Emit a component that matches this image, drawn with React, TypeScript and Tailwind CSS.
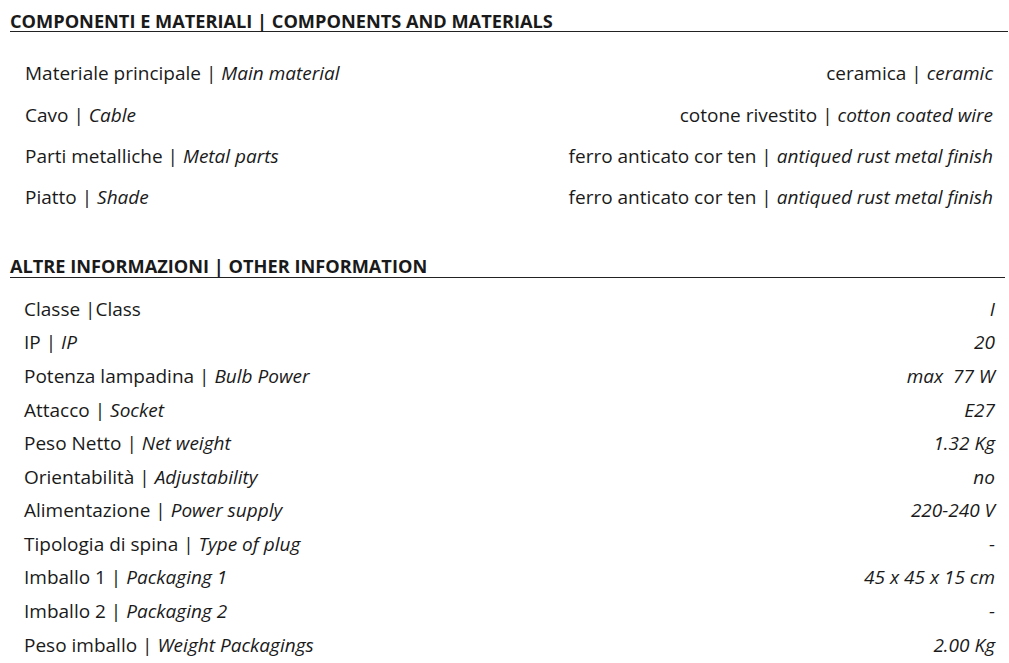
const components = [
  ["Materiale principale", "Main material", "ceramica", "ceramic"],
  ["Cavo", "Cable", "cotone rivestito", "cotton coated wire"],
  ["Parti metalliche", "Metal parts", "ferro anticato cor ten", "antiqued rust metal finish"],
  ["Piatto", "Shade", "ferro anticato cor ten", "antiqued rust metal finish"],
];

const other: [string, string, string, boolean?][] = [
  ["Classe", "Class", "I", true],
  ["IP", "IP", "20"],
  ["Potenza lampadina", "Bulb Power", "max  77 W"],
  ["Attacco", "Socket", "E27"],
  ["Peso Netto", "Net weight", "1.32 Kg"],
  ["Orientabilità", "Adjustability", "no"],
  ["Alimentazione", "Power supply", "220-240 V"],
  ["Tipologia di spina", "Type of plug", "-"],
  ["Imballo 1", "Packaging 1", "45 x 45 x 15 cm"],
  ["Imballo 2", "Packaging 2", "-"],
  ["Peso imballo", "Weight Packagings", "2.00 Kg"],
];

export default function App() {
  return (
    <div className="w-[1009px] h-[663px] overflow-hidden bg-white text-[#1a1a1a] font-['Open_Sans','Noto_Sans',sans-serif]">
      {/* Components and materials */}
      <div className="ml-[10px] w-[998px] pt-[10px]">
        <div className="h-[22px] border-b-[1.5px] border-[#222] text-[18.2px] leading-[22px] font-bold">
          COMPONENTI E MATERIALI | COMPONENTS AND MATERIALS
        </div>
        <div className="mt-[21px] px-[15px]">
          {components.map(([it, en, vit, ven]) => (
            <div key={it + en} className="h-[41.3px] flex items-center justify-between text-[19px]">
              <span>
                {it} | <i>{en}</i>
              </span>
              <span>
                {vit} | <i>{ven}</i>
              </span>
            </div>
          ))}
        </div>
      </div>

      {/* Other information */}
      <div className="ml-[10px] w-[995px] mt-[37px]">
        <div className="h-[23px] border-b-[1.5px] border-[#222] text-[18.2px] leading-[22px] font-bold">
          ALTRE INFORMAZIONI | OTHER INFORMATION
        </div>
        <div className="mt-[14px] pl-[14px] pr-[10px]">
          {other.map(([it, en, val, plain]) => (
            <div key={it} className="h-[33.6px] flex items-center justify-between text-[19px]">
              <span>
                {plain ? (
                  <>
                    {it} |{en}
                  </>
                ) : (
                  <>
                    {it} | <i>{en}</i>
                  </>
                )}
              </span>
              <i className="whitespace-pre">{val}</i>
            </div>
          ))}
        </div>
      </div>
    </div>
  );
}
